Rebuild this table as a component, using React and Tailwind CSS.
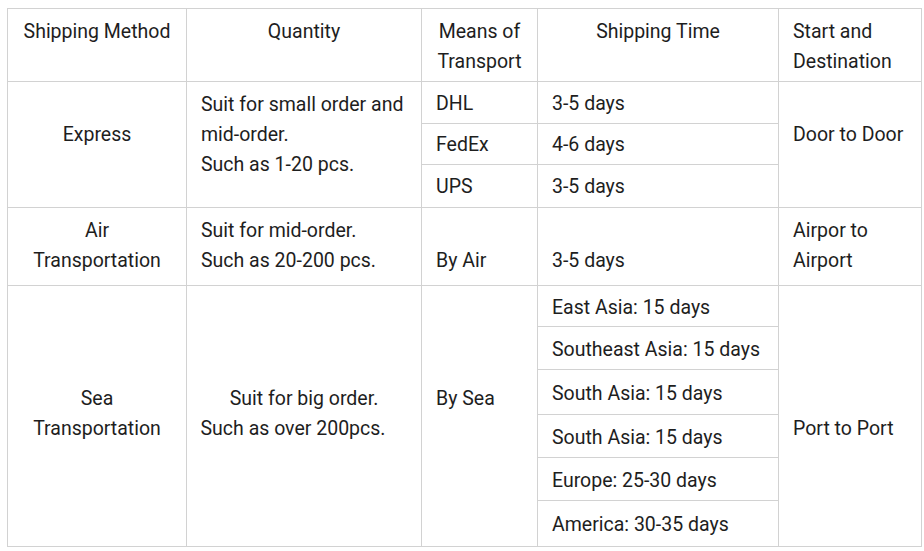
import React from "react";

const cell = "border border-[#d2d2d2] px-[14px] py-0 align-middle";

const seaTimes = [
  ["East Asia: 15 days", "h-[41px]"],
  ["Southeast Asia: 15 days", "h-[43px]"],
  ["South Asia: 15 days", "h-[45px]"],
  ["South Asia: 15 days", "h-[43px]"],
  ["Europe: 25-30 days", "h-[43px]"],
  ["America: 30-35 days", "h-[46px]"],
];

const App = () => {
  return (
    <div className="w-[924px] h-[551px] bg-white pl-[7px] pt-[8px] font-['Roboto',sans-serif] text-[19.5px] leading-[30px] text-[#1e1e1e]">
      <table className="table-fixed border-collapse w-[914px]">
        <colgroup>
          <col className="w-[179px]" />
          <col className="w-[235px]" />
          <col className="w-[116px]" />
          <col className="w-[241px]" />
          <col className="w-[143px]" />
        </colgroup>
        <tbody>
          {/* Header */}
          <tr className="h-[73px]">
            <td className={`${cell} !align-top pt-[8px] text-center`}>Shipping Method</td>
            <td className={`${cell} !align-top pt-[8px] text-center`}>Quantity</td>
            <td className={`${cell} !align-top pt-[8px] text-center`}>
              Means of
              <br />
              Transport
            </td>
            <td className={`${cell} !align-top pt-[8px] text-center`}>Shipping Time</td>
            <td className={`${cell} !align-top pt-[8px]`}>
              Start and
              <br />
              Destination
            </td>
          </tr>

          {/* Express */}
          <tr className="h-[42px]">
            <td rowSpan={3} className={`${cell} text-center pb-[20px]`}>Express</td>
            <td rowSpan={3} className={`${cell} pb-[20px]`}>
              Suit for small order and
              <br />
              mid-order.
              <br />
              Such as 1-20 pcs.
            </td>
            <td className={`${cell} pt-[2px]`}>DHL</td>
            <td className={`${cell} pt-[2px]`}>3-5 days</td>
            <td rowSpan={3} className={`${cell} pb-[20px]`}>Door to Door</td>
          </tr>
          <tr className="h-[41px]">
            <td className={`${cell} pt-[2px]`}>FedEx</td>
            <td className={`${cell} pt-[2px]`}>4-6 days</td>
          </tr>
          <tr className="h-[43px]">
            <td className={`${cell} pt-[2px]`}>UPS</td>
            <td className={`${cell} pt-[2px]`}>3-5 days</td>
          </tr>

          {/* Air */}
          <tr className="h-[78px]">
            <td className={`${cell} text-center pb-[2px]`}>
              Air
              <br />
              Transportation
            </td>
            <td className={`${cell} pb-[2px]`}>
              Suit for mid-order.
              <br />
              Such as 20-200 pcs.
            </td>
            <td className={`${cell} pt-[30px] pb-[2px]`}>By Air</td>
            <td className={`${cell} pt-[30px] pb-[2px]`}>3-5 days</td>
            <td className={`${cell} pb-[2px]`}>
              Airpor to
              <br />
              Airport
            </td>
          </tr>

          {/* Sea */}
          {seaTimes.map(([t, h], i) => (
            <tr key={i} className={h}>
              {i === 0 && (
                <>
                  <td rowSpan={6} className={`${cell} text-center pb-[4px]`}>
                    Sea
                    <br />
                    Transportation
                  </td>
                  <td rowSpan={6} className={`${cell} !px-[4px] text-center pb-[4px]`}>
                    Suit for big order.
                    <br />
                    <span className="inline-block whitespace-nowrap mr-[22px]">Such as over 200pcs.</span>
                  </td>
                  <td rowSpan={6} className={`${cell} pb-[34px]`}>By Sea</td>
                </>
              )}
              <td className={`${cell} pt-[3px]`}>{t}</td>
              {i === 0 && (
                <td rowSpan={6} className={`${cell} pt-[30px] pb-[4px]`}>Port to Port</td>
              )}
            </tr>
          ))}
        </tbody>
      </table>
    </div>
  );
};

export default App;
